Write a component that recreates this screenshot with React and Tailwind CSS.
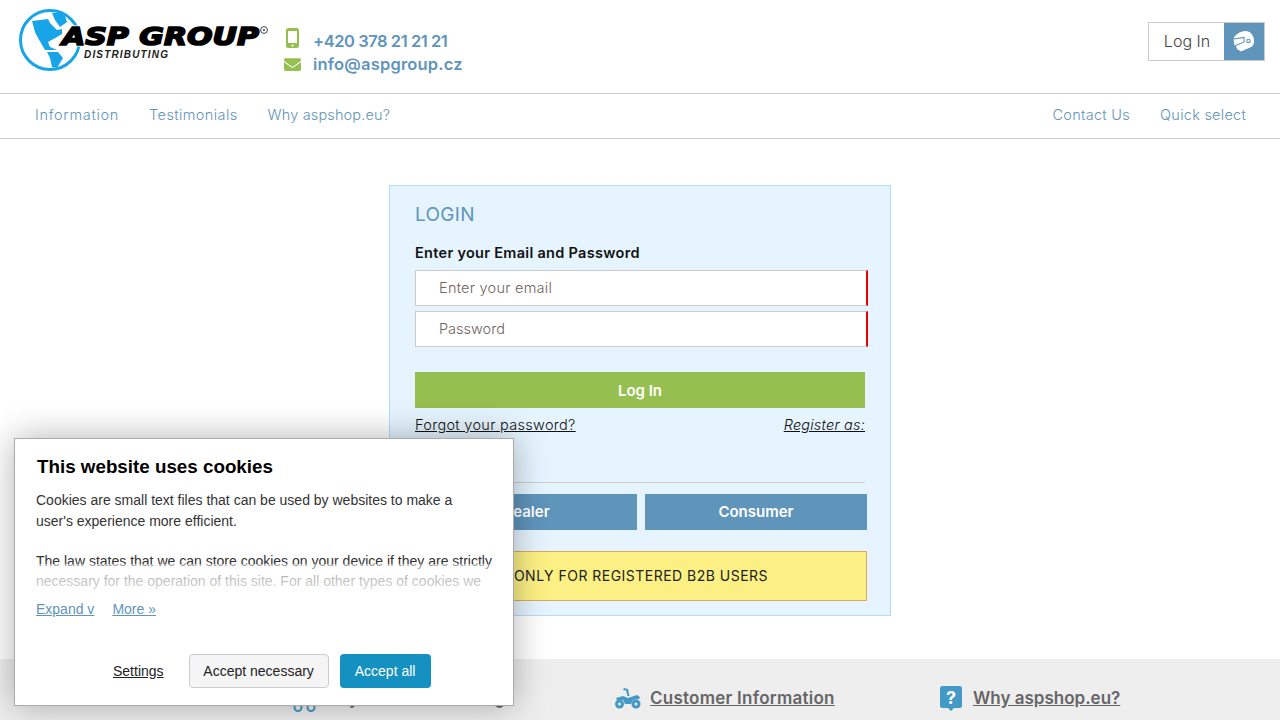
import React from "react";
import { FaEnvelope } from "react-icons/fa";

const mont = "font-['Inter','Liberation_Sans',sans-serif]";

function Logo() {
  return (
    <svg width="252" height="66" viewBox="18 8 252 66" className="block shrink-0">
      <circle cx="50" cy="40" r="29.5" fill="#fff" stroke="#18a5e8" strokeWidth="3" />
      <path d="M32 21 L48 19 L50 23 L57 30 L62 29 L62 34 L57 37 L48 42 L50 47 L57 50 L45 50 L38 38 L35 32 Z" fill="#18a5e8" />
      <path d="M52 13 L64 13 L67 22 L60 27 L55 20 Z" fill="#18a5e8" />
      <path d="M47 52 L58 52 L63 58 L57 68 L52 67 L50 58 Z" fill="#18a5e8" />
      <text x="62" y="45" textLength="197" lengthAdjust="spacingAndGlyphs" fontFamily="DejaVu Sans" fontWeight="700" fontStyle="italic" fontSize="25" fill="#000" stroke="#fff" strokeWidth="3">ASP GROUP</text>
      <text x="62" y="45" textLength="197" lengthAdjust="spacingAndGlyphs" fontFamily="DejaVu Sans" fontWeight="700" fontStyle="italic" fontSize="25" fill="#000" stroke="#000" strokeWidth="1.7">ASP GROUP</text>
      <text x="84" y="58" textLength="84" lengthAdjust="spacing" fontFamily="Liberation Sans" fontWeight="700" fontStyle="italic" fontSize="10" fill="#222">DISTRIBUTING</text>
      <circle cx="264" cy="30" r="3.400" fill="none" stroke="#333" strokeWidth="0.900" />
      <circle cx="264" cy="30" r="1" fill="#333" />
    </svg>
  );
}

function Phone() {
  return (
    <svg width="13" height="20" viewBox="0 0 13 20" className="block">
      <rect width="13" height="20" rx="2.500" fill="#95c04f" />
      <rect x="2" y="3" width="9" height="12" fill="#fff" />
      <circle cx="6.500" cy="17.500" r="1.100" fill="#fff" />
    </svg>
  );
}

function Helmet() {
  return (
    <svg width="22" height="21" viewBox="0 0 22 21" className="block">
      <path d="M1 6 C4 2 9 0 12 0 C18 0 21 5 21 10 C21 14 19 16 16 17 L8 20.500 L4 18 L3 15 Z" fill="#fff" />
      <path d="M0.500 8 L11 6.500 L11 11 L1.500 15" fill="#fff" stroke="#5f94bb" strokeWidth="1.100" />
      <circle cx="15.500" cy="10" r="1.700" fill="#fff" stroke="#5f94bb" strokeWidth="1.100" />
    </svg>
  );
}

function Quad() {
  return (
    <svg width="26" height="21" viewBox="0 0 26 21" className="block">
      <circle cx="4.500" cy="16" r="4.500" fill="#4599c6" />
      <circle cx="21" cy="16" r="4.500" fill="#4599c6" />
      <circle cx="4.500" cy="16" r="1.500" fill="#eee" />
      <circle cx="21" cy="16" r="1.500" fill="#eee" />
      <path d="M1 10 L8 8 L13 10 L22 7 L25 9 L24 11 L18 12 L16 16 L10 16 L8 12 L2 12 Z" fill="#4599c6" />
      <path d="M9 0 L13 1 L14.500 8 L12.500 8 L11 2.500 L8 2 Z" fill="#4599c6" />
    </svg>
  );
}

function Question() {
  return (
    <svg width="22" height="25" viewBox="0 0 22 25" className="block">
      <path d="M2.500 0 H19.500 A2.500 2.500 0 0 1 22 2.500 V19.500 A2.500 2.500 0 0 1 19.500 22 H14 L11 25 L8 22 H2.500 A2.500 2.500 0 0 1 0 19.500 V2.500 A2.500 2.500 0 0 1 2.500 0 Z" fill="#4599c6" />
      <text x="11" y="17.500" textAnchor="middle" fontFamily="Inter" fontWeight="700" fontSize="18" fill="#fff">?</text>
    </svg>
  );
}

function Cart() {
  return (
    <svg width="26" height="23" viewBox="0 0 26 23" className="block">
      <path d="M0 3 H5 L8 13 H20 L24 4 H7" fill="none" stroke="#4599c6" strokeWidth="2" />
      <circle cx="7" cy="18.500" r="3.500" fill="none" stroke="#4599c6" strokeWidth="2" />
      <circle cx="20" cy="18.500" r="3.500" fill="none" stroke="#4599c6" strokeWidth="2" />
    </svg>
  );
}

export default function App() {
  return (
    <div className={`relative h-[720px] w-[1280px] overflow-hidden bg-white ${mont}`}>
      <header className="flex h-[94px] items-start justify-between border-b border-[#ccc] pl-[18px] pr-[15px]">
        <div className="flex pt-[8px]">
          <Logo />
          <div className="flex flex-col pl-[14px] pt-[16px]">
            <div className="flex items-center">
              <div className="flex w-[17px] justify-center"><Phone /></div>
              <span className="ml-[12px] mt-[7px] text-[16.500px] font-semibold leading-[20px] tracking-[-0.45px] text-[#5f94bb]">+420 378 21 21 21</span>
            </div>
            <div className="mt-[3px] flex items-center">
              <div className="flex w-[17px] justify-center"><FaEnvelope className="text-[#95c04f]" size={17} /></div>
              <span className="ml-[12px] text-[16.500px] font-semibold leading-[20px] tracking-[0.2px] text-[#5f94bb]">info@aspgroup.cz</span>
            </div>
          </div>
        </div>
        <div className="mt-[22px] flex h-[39px] w-[117px] border border-[#ccc]">
          <span className="flex flex-1 items-center justify-center pb-px pl-px text-[16px] font-light text-[#444]">Log In</span>
          <span className="flex w-[40px] items-center justify-center bg-[#5f94bb]"><Helmet /></span>
        </div>
      </header>

      <nav className="flex h-[45px] items-center justify-between border-b border-[#ccc] pb-[2px] pl-[35px] pr-[34px] text-[14.500px] font-light text-[#5f94bb]">
        <div className="flex gap-[30px]">
          <span className="tracking-[0.7px]">Information</span>
          <span className="tracking-[0.4px]">Testimonials</span>
          <span className="tracking-[0.15px]">Why aspshop.eu?</span>
        </div>
        <div className="flex gap-[30px]">
          <span className="tracking-[0.3px]">Contact Us</span>
          <span className="tracking-[0.25px]">Quick select</span>
        </div>
      </nav>

      <main className="flex h-[520px] justify-center pt-[46px]">
        <section className="h-[431px] w-[502px] border border-[#b3dcf5] bg-[#e5f4fe] pl-[25px] pt-[17px]">
          <h1 className="pt-px text-[19px] leading-[21px] tracking-[0.3px] text-[#5f94bb]">LOGIN</h1>
          <p className="mt-[18px] text-[14.500px] font-semibold leading-[20px] tracking-[0.3px] text-[#111]">Enter your Email and Password</p>
          <div className="mt-[7px] flex h-[36px] w-[453px] items-center border border-r-2 border-[#ccc] border-r-[#e60000] bg-white pl-[23px] text-[14.500px] font-light tracking-[0.25px] text-[#6f655d]">Enter your email</div>
          <div className="mt-[5px] flex h-[36px] w-[453px] items-center border border-r-2 border-[#ccc] border-r-[#e60000] bg-white pl-[23px] text-[14.500px] font-light text-[#6f655d]">Password</div>
          <div className="mt-[25px] flex h-[36px] w-[450px] items-center justify-center bg-[#95c04f] pt-[2px] text-[15px] font-semibold text-white">Log In</div>
          <div className="mt-[7px] flex w-[450px] justify-between text-[14.500px] font-light leading-[20px] text-[#111] underline">
            <span className="tracking-[0.3px]">Forgot your password?</span>
            <span className="italic tracking-[0.2px]">Register as:</span>
          </div>
          <div className="mt-[47px] h-px w-[450px] bg-[#ccc]" />
          <div className="mt-[11px] flex w-[452px] gap-[8px]">
            <div className="flex h-[36px] flex-1 items-center justify-center bg-[#5f94bb] text-[15px] font-semibold text-white">Dealer</div>
            <div className="flex h-[36px] flex-1 items-center justify-center bg-[#5f94bb] text-[15px] font-semibold text-white">Consumer</div>
          </div>
          <div className="mt-[21px] flex h-[50px] w-[452px] items-center justify-center border border-[#e0a860] bg-[#fcf084] pb-[1px] text-[14px] tracking-[0.48px] text-[#222]">ONLY FOR REGISTERED B2B USERS</div>
        </section>
      </main>

      <footer className="flex h-[61px] items-start bg-[#eee] pl-[291px] text-[#666]">
        <div className="flex w-[324px] items-center pt-[27px]">
          <Cart />
          <span className="ml-[10px] pb-[3px] text-[17px] font-semibold tracking-[0.25px]">Buyer Online Catalog</span>
        </div>
        <div className="flex w-[325px] items-center pt-[27px]">
          <Quad />
          <span className="ml-[9px] text-[17px] font-semibold tracking-[0.25px] underline">Customer Information</span>
        </div>
        <div className="flex items-center pt-[27px]">
          <Question />
          <span className="ml-[11px] text-[17px] font-semibold underline">Why aspshop.eu?</span>
        </div>
      </footer>

      <div className="absolute left-[14px] top-[438px] h-[268px] w-[500px] border border-[#aaa] bg-white font-['Liberation_Sans',sans-serif] shadow-[0_0_32px_rgba(0,0,0,0.3)]">
        <h2 className="ml-[22px] mt-[16px] text-[18.800px] font-bold leading-[24px] text-black">This website uses cookies</h2>
        <div className="relative ml-[21px] mt-[11px] h-[99px] w-[465px] overflow-hidden text-[14px] leading-[20.300px] text-[#333]">
          <p className="leading-[21px]">Cookies are small text files that can be used by websites to make a<br />user's experience more efficient.</p>
          <p className="mt-[19px]">The law states that we can store cookies on your device if they are strictly necessary for the operation of this site. For all other types of cookies we need your permission.</p>
          <div className="absolute inset-x-0 bottom-0 h-[25px] bg-gradient-to-b from-white/50 to-white/80" />
        </div>
        <div className="ml-[21px] mt-[10px] flex gap-[18px] text-[14px] leading-[20px] text-[#5f94bb] underline">
          <span>Expand v</span>
          <span>More »</span>
        </div>
        <div className="ml-[98px] mt-[35px] flex items-center text-[14px] text-[#222]">
          <span className="underline">Settings</span>
          <span className="ml-[25px] flex h-[34px] w-[140px] items-center justify-center rounded-[4px] border border-[#ccc] bg-[#f5f5f5]">Accept necessary</span>
          <span className="ml-[11px] flex h-[34px] w-[91px] items-center justify-center rounded-[4px] bg-[#1491c1] text-white">Accept all</span>
        </div>
      </div>
    </div>
  );
}
